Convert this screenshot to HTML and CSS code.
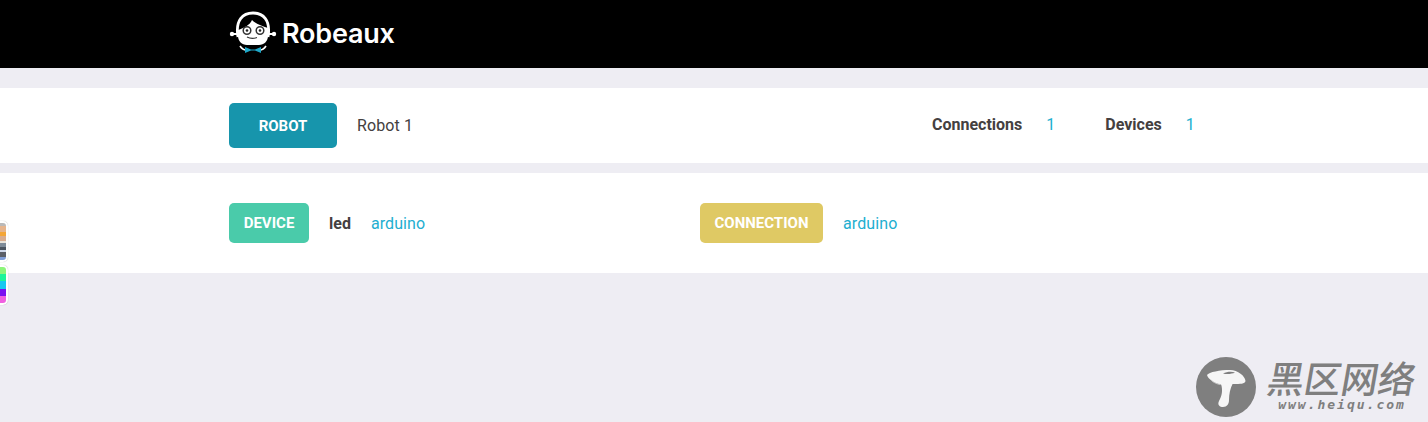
FILE: index.html
```html
<!DOCTYPE html>
<html lang="en">
<head>
<meta charset="utf-8">
<title>Robeaux</title>
<link rel="stylesheet" href="styles.css">
</head>
<body>
<header class="topbar">
  <div class="logo">
    <svg class="logo-mark" width="48" height="44" viewBox="0 0 48 44">
      <path d="M9 27C6 10 14 3 24 3s18 7 15 24" fill="none" stroke="#fff" stroke-width="2.800"/>
      <path d="M3 24h5M40 24h5" stroke="#fff" stroke-width="2"/>
      <circle cx="3" cy="24" r="2.200" fill="#fff"/>
      <circle cx="45" cy="24" r="2.200" fill="#fff"/>
      <path fill="#fff" d="M9 20C15 18 21 15 23 10 27 14 33 16 39 18L39 26C39 31 35 35 30 35H18C13 35 9 31 9 26Z"/>
      <circle cx="18" cy="20.500" r="3.800" fill="#fff" stroke="#333" stroke-width="1.500"/>
      <circle cx="31" cy="20.500" r="3.800" fill="#fff" stroke="#333" stroke-width="1.500"/>
      <circle cx="18" cy="20.500" r="1.300" fill="#222"/>
      <circle cx="31" cy="20.500" r="1.300" fill="#222"/>
      <path d="M18 27c3 1.500 7 1.500 10 .5" fill="none" stroke="#333" stroke-width="1.300"/>
      <path d="M11 36c2 3 4 4 6 4M37 36c-2 3-4 4-6 4" fill="none" stroke="#fff" stroke-width="1.600"/>
      <path fill="#1ea7c8" d="M16 37l6 2.500h4l6-2.500v6l-6-2.500h-4l-6 2.500z"/>
    </svg>
    <span class="logo-text">Robeaux</span>
  </div>
</header>

<section class="panel panel-robot">
  <div class="row">
    <span class="tag tag-robot">ROBOT</span>
    <span class="robot-name">Robot 1</span>
    <div class="stats">
      <strong class="stat-label">Connections</strong>
      <span class="stat-value">1</span>
      <strong class="stat-label stat-second">Devices</strong>
      <span class="stat-value">1</span>
    </div>
  </div>
</section>

<section class="panel panel-items">
  <div class="row">
    <div class="item item-device">
      <span class="tag tag-device">DEVICE</span>
      <strong class="item-name">led</strong>
      <span class="link link-device">arduino</span>
    </div>
    <div class="item">
      <span class="tag tag-connection">CONNECTION</span>
      <span class="link link-connection">arduino</span>
    </div>
  </div>
</section>

<div class="swatches">
  <div class="swatch swatch-a">
    <i class="s1"></i><i class="s2"></i><i class="s3"></i><i class="s4"></i><i class="s5"></i><i class="s6"></i><i class="s7"></i><i class="s8"></i><i class="s9"></i><i class="s10"></i>
  </div>
  <div class="swatch swatch-b">
    <i class="h1"></i><i class="h2"></i><i class="h3"></i><i class="h4"></i><i class="h5"></i>
  </div>
</div>

<div class="watermark">
  <svg class="wm-icon" width="60" height="60" viewBox="0 0 60 60">
    <circle cx="30" cy="30" r="30" fill="#7f7f7f"/>
    <path fill="#f6f6f6" d="M25 27C27 33 26 39 23 44 21 48 24 50 27 50 31 50 33 47 33 43 33 37 34 32 37 26Z"/>
    <path fill="#f6f6f6" d="M11 18C13 15 24 13 34 13 42 13 49 19 49.500 24 49 27 44 27 38 27 32 27 28 28 24 27.500 18 26 12 22 11 18Z"/>
    <path fill="#7f7f7f" d="M27 16.500C31 14.500 36 14.500 39 15.500 36 17 31 17.500 27 16.500Z"/>
    <path fill="none" stroke="#c4c4c4" stroke-width="1" d="M15 23C18 26 21 27 24 27.500"/>
  </svg>
  <div class="wm-text">
    <div class="wm-cn">黑区网络</div>
    <div class="wm-url">www.heiqu.com</div>
  </div>
</div>
</body>
</html>
```

FILE: styles.css
```css
* { box-sizing: border-box; }

html, body {
  margin: 0;
  height: 422px;
  overflow: hidden;
}

body {
  position: relative;
  background: #eeedf3;
  font-family: Roboto, "Liberation Sans", sans-serif;
  font-size: 16px;
  color: #444040;
}

.topbar {
  height: 68px;
  background: #000;
  padding: 10px 0 0 229px;
}

.logo {
  display: flex;
  align-items: center;
  gap: 5px;
  height: 44px;
}

.logo-text {
  font-family: Inter, Lato, sans-serif;
  font-size: 27px;
  font-weight: 600;
  color: #fff;
  letter-spacing: -0.2px;
  transform: translateY(1px);
}

.panel {
  background: #fff;
  padding-left: 229px;
}

.panel-robot {
  height: 75px;
  margin-top: 20px;
  padding-top: 15px;
}

.panel-items {
  height: 100px;
  margin-top: 10px;
  padding-top: 30px;
}

.row {
  display: flex;
  align-items: center;
}

.tag {
  display: flex;
  align-items: center;
  justify-content: center;
  border-radius: 5px;
  color: #fff;
  font-weight: 700;
  font-size: 15px;
}

.tag-robot {
  width: 108px;
  height: 45px;
  background: #1795ac;
}

.tag-device {
  width: 80px;
  height: 40px;
  background: #4acbaa;
}

.tag-connection {
  width: 123px;
  height: 40px;
  background: #dfc964;
}

.robot-name {
  margin-left: 20px;
  letter-spacing: 0.1px;
}

.stats {
  display: flex;
  align-items: center;
  margin-left: 519px;
  transform: translateY(-1px);
}

.stat-label {
  font-weight: 700;
}

.stat-value {
  margin-left: 24px;
  color: #22b0d0;
}

.stat-second {
  margin-left: 50px;
}

.item {
  display: flex;
  align-items: center;
}

.item-device {
  width: 471px;
}

.item-name {
  margin-left: 20px;
  font-weight: 700;
}

.link {
  color: #22aed0;
  letter-spacing: 0.1px;
}

.link-device {
  margin-left: 20px;
}

.link-connection {
  margin-left: 20px;
}

.swatches {
  position: absolute;
  left: -15px;
  top: 221px;
  display: flex;
  flex-direction: column;
  gap: 3px;
}

.swatch {
  width: 23px;
  display: flex;
  flex-direction: column;
  border: 2px solid #fff;
  border-radius: 5px;
  overflow: hidden;
  background: #fff;
  box-shadow: 0 0 1px rgba(0, 0, 0, 0.3);
}

.swatch i { display: block; }

.swatch-a { height: 41px; }
.swatch-b { height: 40px; }

.s1 { height: 3px; background: #b9b9b9; }
.s2 { height: 6px; background: #e6b48c; }
.s3 { height: 4px; background: #f4a636; }
.s4 { height: 5px; background: #d9ad8f; }
.s5 { height: 2px; background: #e9e4da; }
.s6 { height: 4px; background: #7f8c99; }
.s7 { height: 3px; background: #4b5560; }
.s8 { height: 2px; background: #cfd8ea; }
.s9 { height: 5px; background: #5b5f68; }
.s10 { height: 3px; background: #7f9ed8; }

.h1 { height: 7px; background: #8cf57a; }
.h2 { height: 7px; background: #1cf59a; }
.h3 { height: 8px; background: #18c8f0; }
.h4 { height: 7px; background: #7a10f0; }
.h5 { height: 7px; background: #f060e0; }

.watermark {
  position: absolute;
  left: 1196px;
  top: 357px;
  display: flex;
  gap: 12px;
}

.wm-text {
  display: flex;
  flex-direction: column;
  align-items: center;
  color: #7f7f7f;
  font-style: italic;
}

.wm-cn {
  font-family: "Noto Sans CJK SC", sans-serif;
  font-size: 37px;
  line-height: 40px;
  font-weight: 500;
  font-style: normal;
  transform: skewX(-10deg);
}

.wm-url {
  font-family: "DejaVu Sans Mono", "Liberation Mono", monospace;
  font-size: 13px;
  line-height: 16px;
  font-weight: 700;
  letter-spacing: 2px;
}
```
